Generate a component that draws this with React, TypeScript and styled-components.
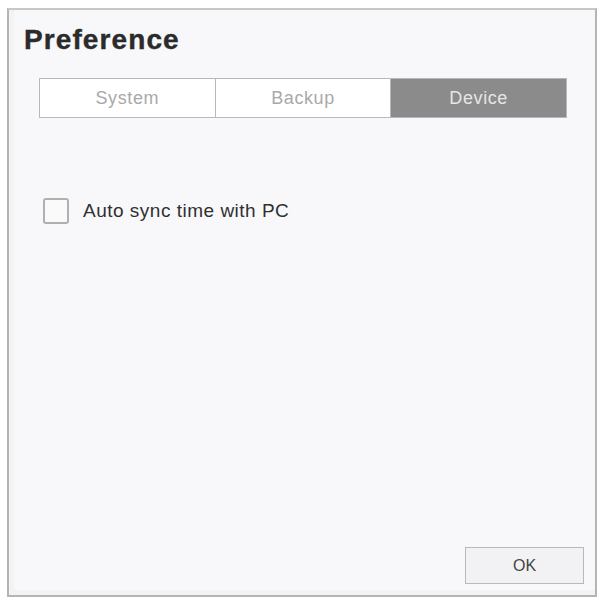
import React from 'react'
import styled, { createGlobalStyle } from 'styled-components'

const GlobalStyle = createGlobalStyle`
  html, body {
    margin: 0;
    padding: 0;
    background: #ffffff;
  }
  body {
    font-family: "Liberation Sans", Arial, sans-serif;
  }
`

const Page = styled.div`
  width: 601px;
  height: 600px;
  padding: 8px 4px 3px 7px;
  box-sizing: border-box;
`

const Dialog = styled.div`
  height: 100%;
  box-sizing: border-box;
  border: 2px solid #b4b4b4;
  border-top-color: #c8c8c8;
  background: #f8f8fb;
  box-shadow: inset 5px 0 0 #f3f3f6, inset 0 -5px 0 #f3f3f6;
  display: flex;
  flex-direction: column;
  padding: 14px 15px 11px 15px;
`

const Title = styled.h1`
  margin: 0;
  font-size: 28px;
  line-height: 32px;
  font-weight: 700;
  letter-spacing: 1.1px;
  color: #2b2b2b;
  -webkit-text-stroke: 0.4px #2b2b2b;
`

const Tabs = styled.div`
  display: flex;
  margin: 22px 13px 0 15px;
  height: 40px;
  border: 1px solid #b8b8b8;
  box-sizing: border-box;
  background: #ffffff;
`

const Tab = styled.div<{ $active?: boolean }>`
  flex: 1;
  display: flex;
  align-items: center;
  justify-content: center;
  font-size: 18px;
  letter-spacing: 0.6px;
  color: ${p => (p.$active ? '#e6e6e6' : '#a9a9a9')};
  background: ${p => (p.$active ? '#8b8b8b' : '#ffffff')};
  & + & {
    border-left: 1px solid #b8b8b8;
  }
`

const Body = styled.div`
  flex: 1;
  padding: 80px 0 0 19px;
`

const CheckRow = styled.label`
  display: flex;
  align-items: center;
  gap: 14px;
  font-size: 19px;
  letter-spacing: 0.5px;
  color: #303030;
`

const Box = styled.span`
  width: 22px;
  height: 22px;
  border: 2px solid #b0b0b0;
  border-radius: 3px;
  background: #fafafa;
`

const Footer = styled.div`
  display: flex;
  justify-content: flex-end;
`

const Button = styled.button`
  width: 119px;
  height: 37px;
  margin-right: -4px;
  border: 1px solid #b9b9b9;
  background: #f2f2f4;
  font-family: "Liberation Sans", Arial, sans-serif;
  font-size: 16px;
  color: #444444;
`

export default function App() {
  return (
    <Page>
      <GlobalStyle />
      <Dialog>
        <Title>Preference</Title>
        <Tabs>
          <Tab>System</Tab>
          <Tab>Backup</Tab>
          <Tab $active>Device</Tab>
        </Tabs>
        <Body>
          <CheckRow>
            <Box />
            Auto sync time with PC
          </CheckRow>
        </Body>
        <Footer>
          <Button>OK</Button>
        </Footer>
      </Dialog>
    </Page>
  )
}
